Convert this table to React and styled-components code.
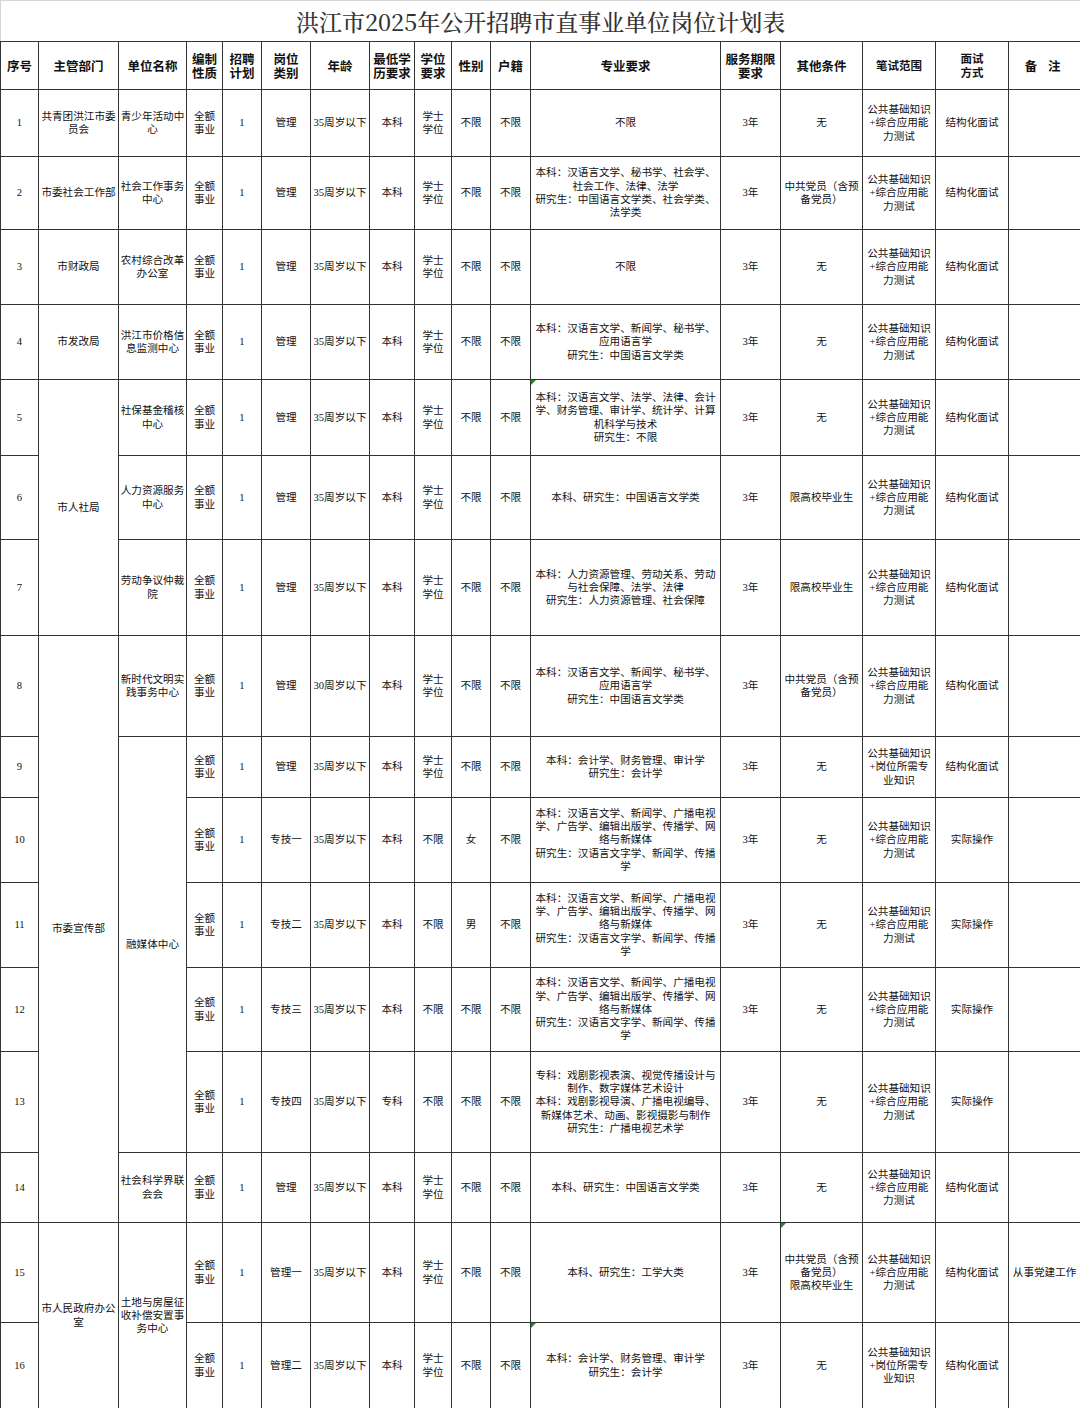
import styled, { createGlobalStyle } from "styled-components";

const GlobalStyle = createGlobalStyle`
  html, body {
    margin: 0;
    padding: 0;
    background: #fff;
  }
  body {
    font-family: "Liberation Serif", "Noto Sans CJK SC", serif;
  }
`;

const widths = [38, 80, 68, 36, 39, 49, 59, 45, 37, 39, 40, 190, 60, 82, 73, 73, 72];

const Sheet = styled.table`
  width: 1080px;
  table-layout: fixed;
  border-collapse: collapse;
  color: #111;
`;

const TitleCell = styled.td`
  height: 40px;
  padding: 0;
  text-align: center;
  vertical-align: middle;
  font-family: "Noto Serif CJK SC", "Noto Sans CJK SC", serif;
  font-size: 23px;
  font-weight: 500;
  color: #333;
  border: 1px solid #d6d6d6;
  border-bottom: 1px solid #333;
`;

const Row = styled.tr`
  height: ${(p) => p.$h}px;
`;

const Head = styled.th`
  padding: 0;
  text-align: center;
  vertical-align: middle;
  font-family: "Noto Sans CJK SC", sans-serif;
  font-weight: 700;
  font-size: ${(p) => p.$size || 12.5}px;
  line-height: 13.5px;
  letter-spacing: ${(p) => (p.$spaced ? "4px" : "0")};
  white-space: pre;
  color: #111;
  border: 1px solid #333;
`;

const Cell = styled.td`
  position: relative;
  padding: 0;
  text-align: center;
  vertical-align: middle;
  font-size: 10.6px;
  line-height: 13.3px;
  white-space: pre;
  border: 1px solid #333;
`;

// Excel comment marker in a cell corner
const Mark = styled.span`
  position: absolute;
  top: 0;
  left: 0;
  width: 0;
  height: 0;
  border-top: 5px solid #1f8a1f;
  border-right: 5px solid transparent;
`;

const headers = [
  { t: "序号" },
  { t: "主管部门" },
  { t: "单位名称" },
  { t: "编制\n性质" },
  { t: "招聘\n计划" },
  { t: "岗位\n类别" },
  { t: "年龄" },
  { t: "最低学\n历要求" },
  { t: "学位\n要求" },
  { t: "性别" },
  { t: "户籍" },
  { t: "专业要求" },
  { t: "服务期限\n要求" },
  { t: "其他条件" },
  { t: "笔试范围", size: 11.5 },
  { t: "面试\n方式", size: 11.5 },
  { t: "备 注", spaced: true },
];

const EX = "全额\n事业";
const XS = "学士\n学位";
const TEST = "公共基础知识\n+综合应用能\n力测试";
const TEST2 = "公共基础知识\n+岗位所需专\n业知识";
const MEDIA =
  "本科：汉语言文学、新闻学、广播电视\n学、广告学、编辑出版学、传播学、网\n络与新媒体\n研究生：汉语言文字学、新闻学、传播\n学";
const ACC = "本科：会计学、财务管理、审计学\n研究生：会计学";
const CHN = "本科：汉语言文学、新闻学、秘书学、\n应用语言学\n研究生：中国语言文学类";
const PARTY = "中共党员（含预\n备党员）";

const rows = [
  { h: 67, cells: ["1", "共青团洪江市委\n员会", "青少年活动中\n心", EX, "1", "管理", "35周岁以下", "本科", XS, "不限", "不限", "不限", "3年", "无", TEST, "结构化面试", ""] },
  { h: 73, cells: ["2", "市委社会工作部", "社会工作事务\n中心", EX, "1", "管理", "35周岁以下", "本科", XS, "不限", "不限", "本科：汉语言文学、秘书学、社会学、\n社会工作、法律、法学\n研究生：中国语言文学类、社会学类、\n法学类", "3年", PARTY, TEST, "结构化面试", ""] },
  { h: 75, cells: ["3", "市财政局", "农村综合改革\n办公室", EX, "1", "管理", "35周岁以下", "本科", XS, "不限", "不限", "不限", "3年", "无", TEST, "结构化面试", ""] },
  { h: 75, cells: ["4", "市发改局", "洪江市价格信\n息监测中心", EX, "1", "管理", "35周岁以下", "本科", XS, "不限", "不限", CHN, "3年", "无", TEST, "结构化面试", ""] },
  { h: 76, cells: ["5", { t: "市人社局", rs: 3 }, "社保基金稽核\n中心", EX, "1", "管理", "35周岁以下", "本科", XS, "不限", "不限", { t: "本科：汉语言文学、法学、法律、会计\n学、财务管理、审计学、统计学、计算\n机科学与技术\n研究生：不限", mark: true }, "3年", "无", TEST, "结构化面试", ""] },
  { h: 84, cells: ["6", "人力资源服务\n中心", EX, "1", "管理", "35周岁以下", "本科", XS, "不限", "不限", "本科、研究生：中国语言文学类", "3年", "限高校毕业生", TEST, "结构化面试", ""] },
  { h: 96, cells: ["7", "劳动争议仲裁\n院", EX, "1", "管理", "35周岁以下", "本科", XS, "不限", "不限", "本科：人力资源管理、劳动关系、劳动\n与社会保障、法学、法律\n研究生：人力资源管理、社会保障", "3年", "限高校毕业生", TEST, "结构化面试", ""] },
  { h: 101, cells: ["8", { t: "市委宣传部", rs: 7 }, "新时代文明实\n践事务中心", EX, "1", "管理", "30周岁以下", "本科", XS, "不限", "不限", CHN, "3年", PARTY, TEST, "结构化面试", ""] },
  { h: 61, cells: ["9", { t: "融媒体中心", rs: 5 }, EX, "1", "管理", "35周岁以下", "本科", XS, "不限", "不限", ACC, "3年", "无", TEST2, "结构化面试", ""] },
  { h: 85, cells: ["10", EX, "1", "专技一", "35周岁以下", "本科", "不限", "女", "不限", MEDIA, "3年", "无", TEST, "实际操作", ""] },
  { h: 85, cells: ["11", EX, "1", "专技二", "35周岁以下", "本科", "不限", "男", "不限", MEDIA, "3年", "无", TEST, "实际操作", ""] },
  { h: 84, cells: ["12", EX, "1", "专技三", "35周岁以下", "本科", "不限", "不限", "不限", MEDIA, "3年", "无", TEST, "实际操作", ""] },
  { h: 101, cells: ["13", EX, "1", "专技四", "35周岁以下", "专科", "不限", "不限", "不限", "专科：戏剧影视表演、视觉传播设计与\n制作、数字媒体艺术设计\n本科：戏剧影视导演、广播电视编导、\n新媒体艺术、动画、影视摄影与制作\n研究生：广播电视艺术学", "3年", "无", TEST, "实际操作", ""] },
  { h: 70, cells: ["14", "社会科学界联\n会会", EX, "1", "管理", "35周岁以下", "本科", XS, "不限", "不限", "本科、研究生：中国语言文学类", "3年", "无", TEST, "结构化面试", ""] },
  { h: 100, cells: ["15", { t: "市人民政府办公\n室", rs: 2 }, { t: "土地与房屋征\n收补偿安置事\n务中心", rs: 2 }, EX, "1", "管理一", "35周岁以下", "本科", XS, "不限", "不限", "本科、研究生：工学大类", "3年", { t: PARTY + "\n限高校毕业生", mark: true }, TEST, "结构化面试", "从事党建工作"] },
  { h: 86, cells: ["16", EX, "1", "管理二", "35周岁以下", "本科", XS, "不限", "不限", { t: ACC, mark: true }, "3年", "无", TEST2, "结构化面试", ""] },
];

const App = () => {
  return (
    <>
      <GlobalStyle />
      <Sheet>
        <colgroup>
          {widths.map((w, i) => (
            <col key={i} style={{ width: w }} />
          ))}
        </colgroup>
        <tbody>
          <tr>
            <TitleCell colSpan={17}>洪江市2025年公开招聘市直事业单位岗位计划表</TitleCell>
          </tr>
          <Row $h={48}>
            {headers.map((h, i) => (
              <Head key={i} $size={h.size} $spaced={h.spaced}>
                {h.t}
              </Head>
            ))}
          </Row>
          {rows.map((r, ri) => (
            <Row key={ri} $h={r.h}>
              {r.cells.map((c, ci) => {
                const cell = typeof c === "string" ? { t: c } : c;
                return (
                  <Cell key={ci} rowSpan={cell.rs}>
                    {cell.mark && <Mark />}
                    {cell.t}
                  </Cell>
                );
              })}
            </Row>
          ))}
        </tbody>
      </Sheet>
    </>
  );
};

export default App;
